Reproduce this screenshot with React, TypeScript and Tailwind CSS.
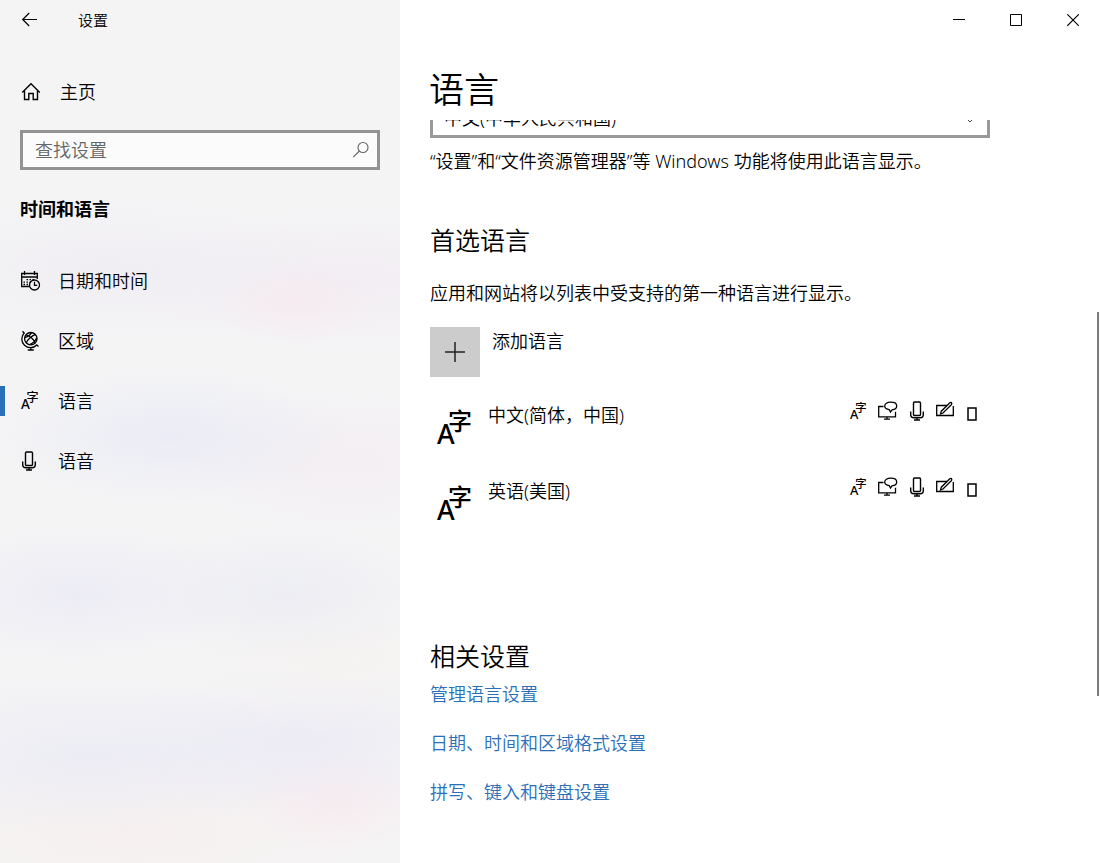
import { useLayoutEffect, useRef } from 'react';
import type { ReactNode } from 'react';

// Icons
const BackIcon = () => (
  <svg width="20" height="20" viewBox="0 0 20 20" fill="none" stroke="currentColor" strokeWidth="1.2" aria-hidden="true">
    <path d="M17 9.5H2.8M9.2 3 2.7 9.5l6.5 6.5" />
  </svg>
);

const HomeIcon = () => (
  <svg width="20" height="20" viewBox="0 0 20 20" fill="none" stroke="currentColor" strokeWidth="1.4" aria-hidden="true">
    <path d="M2.2 10.5 11 1.8l8.8 8.7M4.5 8.5v9h4.3v-6h4.4v6h4.3v-9" />
  </svg>
);

const SearchIcon = () => (
  <svg width="18" height="18" viewBox="0 0 18 18" fill="none" stroke="currentColor" strokeWidth="1.1" aria-hidden="true">
    <circle cx="12" cy="6.5" r="5" />
    <path d="M8.4 10 2.2 16.2" />
  </svg>
);

const CalendarClockIcon = () => (
  <svg width="20" height="20" viewBox="0 0 20 20" fill="none" stroke="currentColor" strokeWidth="1.3" aria-hidden="true">
    <path d="M8.5 15.500H.7V2.500h15.600V8M.7 6h15.600M3.500 0v4M13.500 0v4" />
    <path d="M5.500 8.700H7M8.500 8.700H10M11.500 8.700H13M2.500 11.200H4M5.500 11.200H7M2.500 13.500H4M5.500 13.500H7M8.500 11.200h1" />
    <circle cx="13.5" cy="14" r="5" />
    <path d="M13.5 10.800v3.500h2.700" />
  </svg>
);

const GlobeIcon = () => (
  <svg width="20" height="20" viewBox="0 0 20 20" fill="none" stroke="currentColor" strokeWidth="1.3" aria-hidden="true">
    <circle cx="9.8" cy="7.7" r="6.2" />
    <path d="M5.200 3.800c3.300.8 8 5 9.300 8.300M14.200 3.600c-3.300 1-8 5.200-9 8.400M3.800 6.500C6.500 6 9 4.200 10.500 1.600M8.500 13.700c3-1.200 5.800-3.700 7.300-7" />
    <path d="M1.500.2 3.200 2A8.700 8.700 0 0 0 15.800 14l1.700 1.500M9.800 16.500V19M6.800 19h6" />
  </svg>
);

const MicIcon = () => (
  <svg width="16" height="20" viewBox="0 0 16 20" fill="none" stroke="currentColor" strokeWidth="1.4" aria-hidden="true">
    <rect x="4.5" y="1" width="7" height="13.5" rx="1" />
    <path d="M1.7 10.500v3q0 3.200 3.200 3.200h6.200q3.200 0 3.200-3.200v-3M8 16.700V19M5 19h6" />
  </svg>
);

const LanguageIcon = ({ className }: { className: string }) => (
  <svg viewBox="0 0 36 38" className={`overflow-visible ${className}`} fill="currentColor" aria-hidden="true">
    <text x="0" y="35" fontSize="27" fontWeight="500" fontFamily="'Noto Sans', sans-serif">A</text>
    <text x="11" y="21" fontSize="24" fontWeight="500" fontFamily="'Noto Sans CJK SC', sans-serif">字</text>
  </svg>
);

const DisplayIcon = () => (
  <svg width="20" height="20" viewBox="0 0 20 20" fill="none" stroke="currentColor" strokeWidth="1.3" aria-hidden="true">
    <path d="M5.500 5.500H.7v10.300h16.800v-5M9 15.800V18M6 18.200h6" />
    <path d="M11.200 8.700C8.200 8.200 6.700 6.900 6.700 5c0-2.300 2.400-3.800 6-3.800s6 1.500 6 3.800c0 2.200-1.900 3.600-4.700 3.800L12.500 11z" />
  </svg>
);

const HandwritingIcon = () => (
  <svg width="20" height="20" viewBox="0 0 20 20" fill="none" stroke="currentColor" strokeWidth="1.3" aria-hidden="true">
    <path d="M11 4.500H.7v10h16.600v-9.500" />
    <path d="M4.500 13l.8-2.800 8.500-8.400q1.300-.9 1.900.3.300.8-.4 1.600L7 12z" />
  </svg>
);

const EmptyGlyphIcon = () => (
  <svg width="10" height="14" viewBox="0 0 10 14" fill="none" stroke="currentColor" strokeWidth="1.5" aria-hidden="true">
    <rect x="1" y="1" width="8" height="12" />
  </svg>
);

const navItems: { label: string; icon: ReactNode; active?: boolean }[] = [
  { label: '日期和时间', icon: <CalendarClockIcon /> },
  { label: '区域', icon: <GlobeIcon /> },
  { label: '语言', icon: <LanguageIcon className="h-5 w-[18px]" />, active: true },
  { label: '语音', icon: <MicIcon /> },
];

const languages = ['中文(简体，中国)', '英语(美国)'];

const relatedLinks = ['管理语言设置', '日期、时间和区域格式设置', '拼写、键入和键盘设置'];

// Left panel
const Sidebar = () => (
  <aside className="flex w-[400px] shrink-0 flex-col bg-[#f4f4f5] bg-[radial-gradient(ellipse_80px_40px_at_297px_304px,#f9e6ec80,#f9e6ec00),radial-gradient(ellipse_240px_80px_at_360px_280px,#f1eaf2a0,#f1eaf200),radial-gradient(ellipse_240px_80px_at_110px_270px,#eeeaf1a0,#eeeaf100),radial-gradient(ellipse_180px_70px_at_170px_436px,#e6e8f6a0,#e6e8f600),radial-gradient(ellipse_200px_80px_at_350px_462px,#f3ebf0a0,#f3ebf000),radial-gradient(ellipse_160px_70px_at_77px_593px,#e9e8f5a0,#e9e8f500),radial-gradient(ellipse_160px_70px_at_283px_595px,#e9eaf3a0,#e9eaf300),radial-gradient(ellipse_200px_80px_at_340px_655px,#f6f2efa0,#f6f2ef00),radial-gradient(ellipse_240px_80px_at_90px_755px,#e8e8f4a0,#e8e8f400),radial-gradient(ellipse_200px_80px_at_310px_740px,#e9e7f4a0,#e9e7f400),radial-gradient(ellipse_100px_50px_at_337px_802px,#f9e8eda0,#f9e8ed00),radial-gradient(ellipse_300px_90px_at_130px_835px,#f6efeecc,#f6efee00)]">
    <div className="flex h-10 items-center gap-[38px] pl-5">
      <button type="button" aria-label="返回">
        <BackIcon />
      </button>
      <span className="text-[15px] leading-5">设置</span>
    </div>
    <a href="#home" className="mt-8 flex h-10 items-center gap-5 px-5">
      <HomeIcon />
      主页
    </a>
    <label className="mx-5 mt-[18px] flex h-10 items-center border-3 border-[#929292] bg-white/60 pr-2 pl-3 text-[#666]">
      <input
        type="search"
        aria-label="查找设置"
        placeholder="查找设置"
        className="min-w-0 flex-1 bg-transparent outline-none placeholder:text-[#666]"
      />
      <SearchIcon />
    </label>
    <h2 className="mt-[27px] px-5 font-bold">时间和语言</h2>
    <nav className="mt-[30px]">
      {navItems.map((item) => (
        <a key={item.label} href="#nav" className="flex h-15 items-center" aria-current={item.active ? 'page' : undefined}>
          <span className={item.active ? 'h-[30px] w-[5px] bg-[#2a6fb8]' : 'h-[30px] w-[5px]'} />
          <span className="ml-4 flex w-[37px] items-center">{item.icon}</span>
          {item.label}
        </a>
      ))}
    </nav>
  </aside>
);

const WindowControls = () => (
  <div className="flex h-10 shrink-0 justify-end">
    <button type="button" aria-label="最小化" className="flex w-[57px] items-center justify-center">
      <svg width="13" height="13" viewBox="0 0 13 13" stroke="currentColor" aria-hidden="true"><path d="M0 5.500h12" /></svg>
    </button>
    <button type="button" aria-label="最大化" className="flex w-[57px] items-center justify-center">
      <svg width="13" height="13" viewBox="0 0 13 13" fill="none" stroke="currentColor" aria-hidden="true"><path d="M.5.5h11v11H.5z" /></svg>
    </button>
    <button type="button" aria-label="关闭" className="flex w-[57px] items-center justify-center">
      <svg width="13" height="13" viewBox="0 0 13 13" stroke="currentColor" strokeWidth="1.1" aria-hidden="true"><path d="M.3.3l11.500 11.500M11.800.3.3 11.800" /></svg>
    </button>
  </div>
);

const LanguageRow = ({ name }: { name: string }) => (
  <li className="flex h-[76px] items-start pt-3 pr-[13px]">
    <LanguageIcon className="mt-2 ml-[7px] h-[38px] w-9 shrink-0" />
    <span className="ml-[15px] flex-1 pt-0.5">{name}</span>
    <span className="flex h-5 items-center gap-[11px]">
      <LanguageIcon className="h-[18px] w-[17px]" />
      <DisplayIcon />
      <MicIcon />
      <HandwritingIcon />
      <span className="pt-1.5"><EmptyGlyphIcon /></span>
    </span>
  </li>
);

function App() {
  const scrollRef = useRef<HTMLDivElement>(null);

  // the display language box sits half under the page title
  useLayoutEffect(() => {
    if (scrollRef.current) scrollRef.current.scrollTop = 22;
  }, []);

  return (
    <div className="flex h-screen bg-white font-['Noto_Sans','Noto_Sans_CJK_SC',sans-serif] text-[18px] leading-6 font-[350] text-black">
      <Sidebar />
      <main className="relative flex min-w-0 flex-1 flex-col">
        <WindowControls />
        <h1 className="h-20 shrink-0 pt-5 pl-[29px] text-[35px] leading-[60px]">语言</h1>
        <div ref={scrollRef} className="min-h-0 flex-1 overflow-y-auto pl-[30px] [scrollbar-width:none]">
          <div className="max-w-[560px] pb-20">
            <div className="grid items-center">
              <select
                aria-label="Windows 显示语言"
                className="col-start-1 row-start-1 h-10 w-full appearance-none border-3 border-[#999] bg-white pl-[11px]"
              >
                <option>中文(中华人民共和国)</option>
              </select>
              <svg
                width="12"
                height="10"
                viewBox="0 0 12 10"
                fill="none"
                stroke="#444"
                className="pointer-events-none col-start-1 row-start-1 mr-[14px] justify-self-end"
                aria-hidden="true"
              >
                <path d="M.5 3.500 6 9l5.500-5.500" />
              </svg>
            </div>
            <p className="mt-[11px] whitespace-nowrap">“设置”和“文件资源管理器”等 Windows 功能将使用此语言显示。</p>

            <h2 className="mt-[51px] text-[25px] leading-8">首选语言</h2>
            <p className="mt-[25px] whitespace-nowrap">应用和网站将以列表中受支持的第一种语言进行显示。</p>
            <button type="button" className="mt-[22px] flex items-start gap-3 text-left">
              <span className="flex size-[50px] items-center justify-center bg-[#ccc]">
                <svg width="20" height="20" viewBox="0 0 20 20" stroke="#222" strokeWidth="1.5" aria-hidden="true">
                  <path d="M0 10h20M10 0v20" />
                </svg>
              </span>
              <span className="pt-0.5">添加语言</span>
            </button>
            <ul className="mt-3">
              {languages.map((name) => (
                <LanguageRow key={name} name={name} />
              ))}
            </ul>

            <h2 className="mt-[99px] text-[25px] leading-8">相关设置</h2>
            <ul className="mt-[10px] flex flex-col gap-[25px]">
              {relatedLinks.map((link) => (
                <li key={link}>
                  <a href="#related" className="text-[#2a6fb8]">{link}</a>
                </li>
              ))}
            </ul>
          </div>
        </div>
        {/* scroll thumb */}
        <div className="absolute top-[312px] right-[3px] h-[384px] w-[2px] bg-[#7a7a7a]" />
      </main>
    </div>
  );
}

export default App;
